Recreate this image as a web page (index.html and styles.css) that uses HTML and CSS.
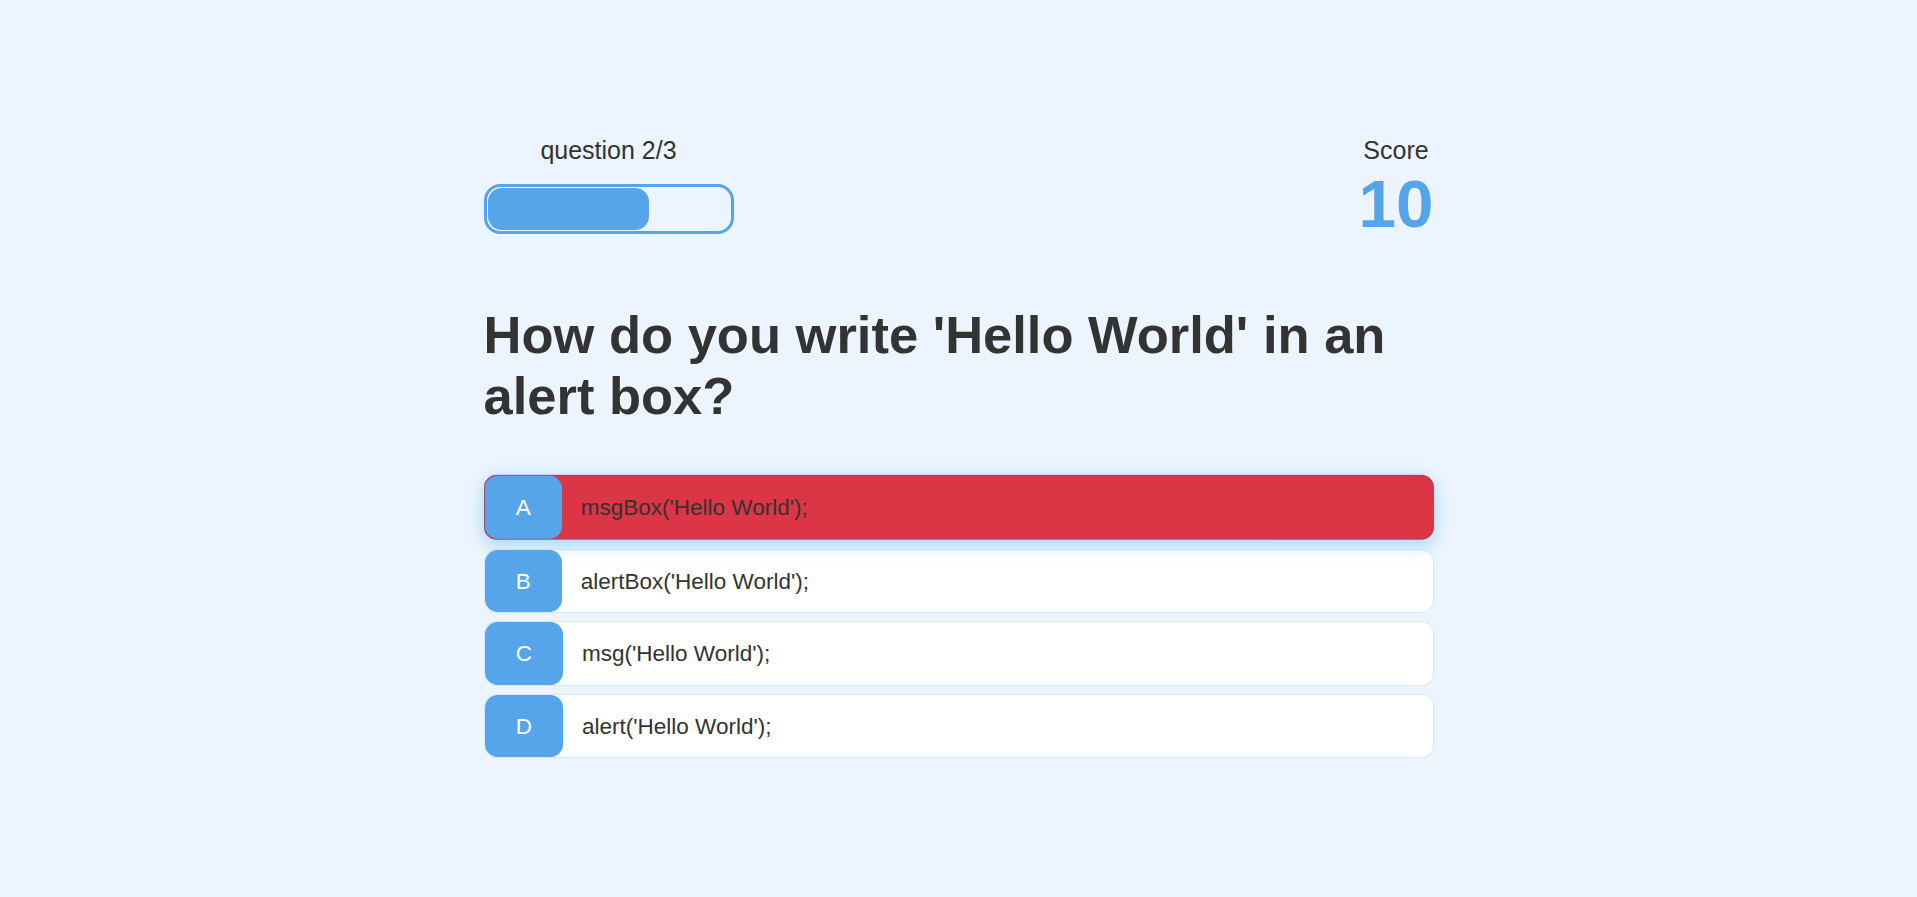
FILE: index.html
```html
<!DOCTYPE html>
<html lang="en">
<head>
<meta charset="UTF-8">
<title>Quiz</title>
<link rel="stylesheet" href="styles.css">
</head>
<body>
<div class="container">
  <div class="game">
    <div class="hud">
      <div class="hud-item">
        <p class="hud-prefix">question 2/3</p>
        <div class="progress-bar">
          <div class="progress-bar-full" style="width: 66.6667%"></div>
        </div>
      </div>
      <div class="hud-item">
        <p class="hud-prefix">Score</p>
        <h1 class="hud-main-text">10</h1>
      </div>
    </div>
    <h2 class="question">How do you write 'Hello World' in an alert box?</h2>
    <div class="choice-container incorrect hovered">
      <p class="choice-prefix">A</p>
      <p class="choice-text">msgBox('Hello World');</p>
    </div>
    <div class="choice-container">
      <p class="choice-prefix">B</p>
      <p class="choice-text">alertBox('Hello World');</p>
    </div>
    <div class="choice-container">
      <p class="choice-prefix">C</p>
      <p class="choice-text">msg('Hello World');</p>
    </div>
    <div class="choice-container">
      <p class="choice-prefix">D</p>
      <p class="choice-text">alert('Hello World');</p>
    </div>
  </div>
</div>
</body>
</html>
```

FILE: styles.css
```css
:root {
  background-color: #ecf5ff;
  font-size: 12.5px;
}

* {
  box-sizing: border-box;
  font-family: "Liberation Sans", Arial, Helvetica, sans-serif;
  margin: 0;
  padding: 0;
  color: #333;
}

body {
  margin: 0;
}

.container {
  width: 100%;
  height: 100vh;
  max-width: 80rem;
  margin: 0 auto;
  padding: calc(2rem + 5px) 2rem 2rem;
  display: flex;
  justify-content: center;
  align-items: center;
}

.game {
  width: 100%;
  display: flex;
  flex-direction: column;
}

.hud {
  display: flex;
  justify-content: space-between;
}

.hud-prefix {
  text-align: center;
  font-size: 2rem;
}

.hud-main-text {
  text-align: center;
  font-size: 5.4rem;
  font-weight: bold;
  color: #56a5eb;
  margin-bottom: 5rem;
}

.progress-bar {
  width: 20rem;
  height: 4rem;
  border: 3px solid #56a5eb;
  border-radius: 1.3rem;
  margin-top: 1.5rem;
  padding: 1px;
  display: flex;
}

.progress-bar-full {
  height: 100%;
  background-color: #56a5eb;
  border-radius: 1.1rem;
}

.question {
  font-size: 4.2rem;
  font-weight: bold;
  margin-bottom: 4rem;
}

.choice-container {
  display: flex;
  margin-bottom: 8px;
  width: 100%;
  font-size: 1.8rem;
  line-height: 25px;
  border: 1px solid rgba(86, 165, 235, 0.25);
  border-radius: 1rem;
  background-color: #fff;
}

.choice-container.hovered {
  box-shadow: 0 0.4rem 1.4rem 0 rgba(86, 185, 235, 0.5);
  transform: translateY(-0.1rem);
}

.choice-container.incorrect {
  background-color: #dc3545;
  border-color: rgba(130, 80, 160, 0.6);
}

.choice-prefix {
  padding: 1.5rem 2.5rem;
  background-color: #56a5eb;
  color: #fff;
  border-radius: 1rem;
  font-size: 1.8rem;
}

.choice-text {
  padding: 1.5rem;
  width: 100%;
  font-size: 1.8rem;
}
```
